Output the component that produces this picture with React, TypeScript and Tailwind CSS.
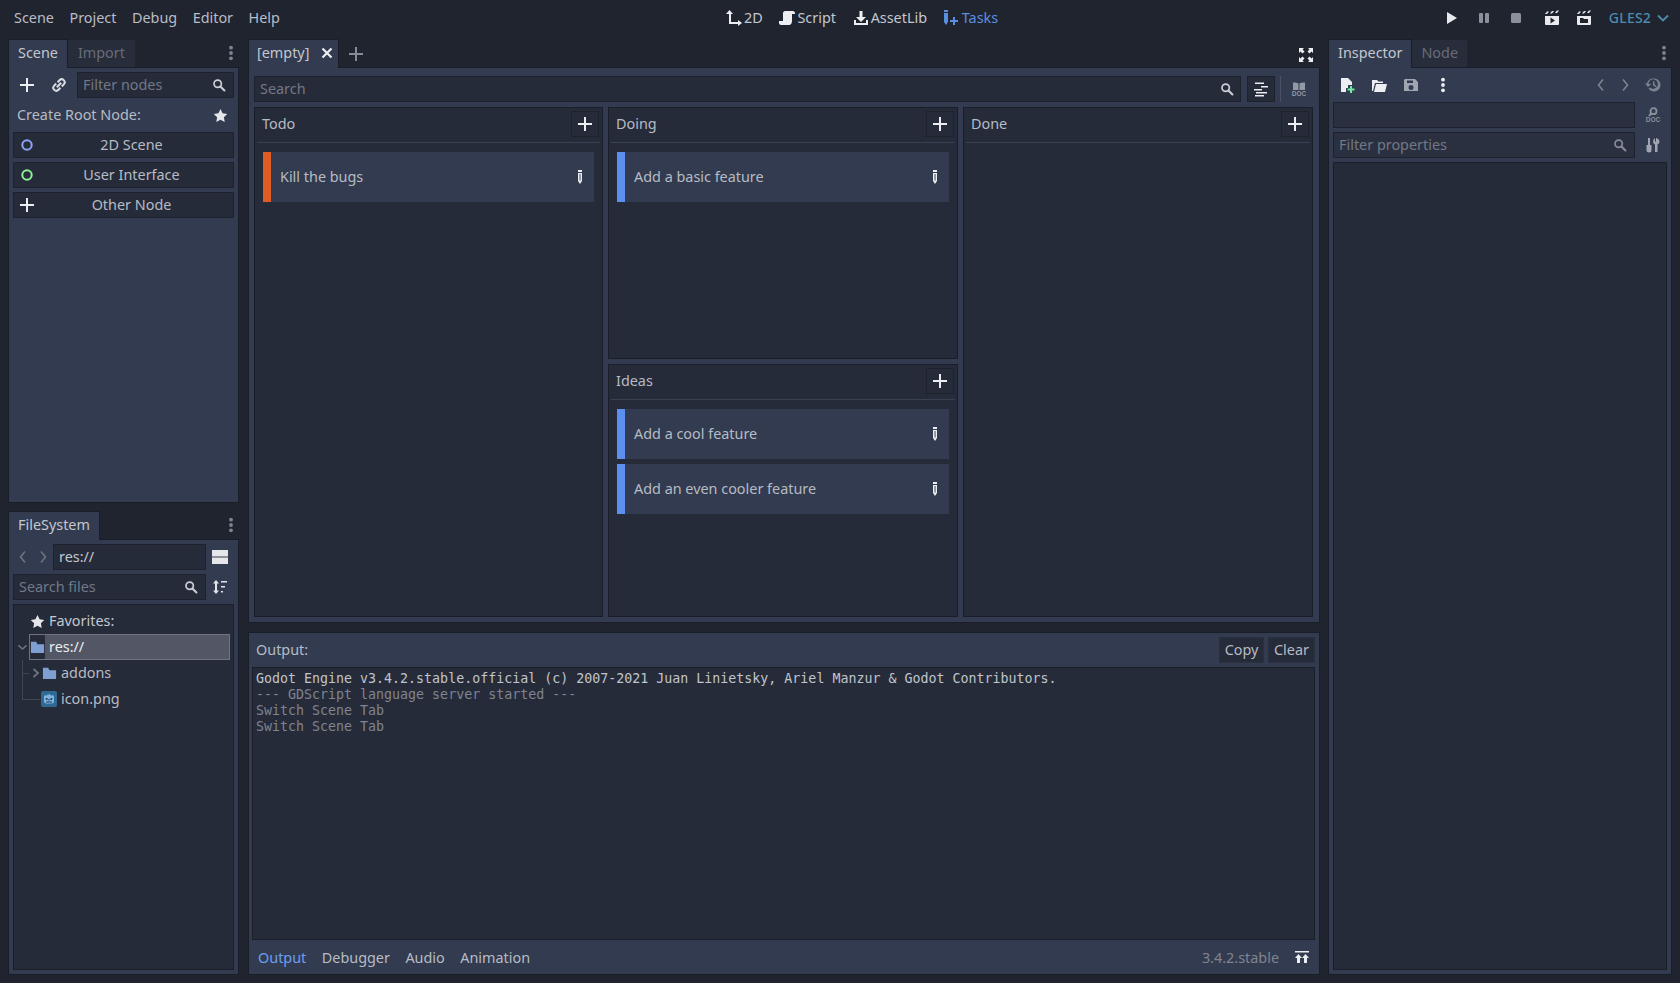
import React from "react";

type IP = { className?: string };
const S = ({ w = 16, h = 16, vb, className, children }: { w?: number; h?: number; vb?: string; className?: string; children: React.ReactNode }) => (
  <svg width={w} height={h} viewBox={vb ?? `0 0 ${w} ${h}`} className={`shrink-0 ${className ?? ""}`} fill="currentColor">
    {children}
  </svg>
);
const Plus = ({ className }: IP) => (
  <S className={className}><path d="M7 1h2v6h6v2H9v6H7V9H1V7h6z" /></S>
);
const Search = ({ className }: IP) => (
  <S className={className}>
    <circle cx="6.5" cy="6.5" r="4.2" fill="none" stroke="currentColor" strokeWidth="2" />
    <path d="M9.6 9.6l4.6 4.6" stroke="currentColor" strokeWidth="2.4" strokeLinecap="round" />
  </S>
);
const Star = ({ className }: IP) => (
  <S className={className}><path d="M8 1l2.2 4.6 5 .7-3.6 3.5.9 5L8 12.4l-4.5 2.4.9-5L.8 6.3l5-.7z" /></S>
);
const Dots = ({ className }: IP) => (
  <S className={className}><circle cx="8" cy="2.7" r="1.9" /><circle cx="8" cy="8" r="1.9" /><circle cx="8" cy="13.3" r="1.9" /></S>
);
const Link = ({ className }: IP) => (
  <S className={className}>
    <g fill="none" stroke="currentColor" strokeWidth="2">
      <path d="M6.6 5.2l1.9-2a3 3 0 0 1 4.3 4.2L10.8 9.5" />
      <path d="M9.4 10.8l-1.9 2a3 3 0 0 1-4.3-4.2l2-2.1" />
      <path d="M5.8 10.2l4.4-4.4" />
    </g>
  </S>
);
const Ring = ({ color }: { color: string }) => (
  <S w={12} h={12}>
    <circle cx="6" cy="6" r="4.7" fill="none" stroke={color} strokeWidth="2" />
  </S>
);
const ChevL = ({ className }: IP) => (
  <S className={className}><path d="M10 2.5L5.5 8l4.5 5.5" fill="none" stroke="currentColor" strokeWidth="1.6" /></S>
);
const ChevR = ({ className }: IP) => (
  <S className={className}><path d="M6 2.5L10.500 8 6 13.500" fill="none" stroke="currentColor" strokeWidth="1.6" /></S>
);
const Folder = ({ className }: IP) => (
  <S className={className}><path d="M1 2.500h5.500l1.500 2.500h7v9.500H2a1 1 0 0 1-1-1z" /></S>
);
const GodotIcon = () => (
  <S>
    <rect x="0" y="0" width="16" height="16" rx="2" fill="#2f6a94" />
    <path d="M3 5l1.500-1 1 1 1-1.500h3l1 1.500 1-1 1.500 1v6.500l-2 1H5l-2-1z" fill="#7fb4e0" />
    <circle cx="5.700" cy="8" r="1.100" fill="#1d3e5c" />
    <circle cx="10.300" cy="8" r="1.100" fill="#1d3e5c" />
    <rect x="7.400" y="8" width="1.200" height="1.500" fill="#1d3e5c" />
    <rect x="5" y="10.500" width="6" height="1" fill="#1d3e5c" />
  </S>
);
const Pencil = ({ className }: IP) => (
  <S w={6} h={16} className={className}>
    <path d="M1 1h4v2H1zM1 4h4v8L3 15l-2-3z" />
    <rect x="2.600" y="5" width="0.900" height="6.500" fill="#323b4f" />
  </S>
);
const Doc = ({ top, className }: { top: "book" | "search"; className?: string }) => (
  <S className={className}>
    {top === "book" ? (
      <path d="M2 1.500c2.500 0 4.500 0 5.500 1v6.500H2zM8.500 2.500c1-1 3-1 5.500-1V9H8.500z" />
    ) : (
      <g>
        <circle cx="8.500" cy="4.200" r="3" fill="none" stroke="currentColor" strokeWidth="1.800" />
        <path d="M6.300 6.500L4 9" stroke="currentColor" strokeWidth="2" />
      </g>
    )}
    <text x="8" y="15.400" textAnchor="middle" fontFamily="'Liberation Sans', sans-serif" fontWeight="700" fontSize="6.500">DOC</text>
  </S>
);

const Tab = ({ children, active, px = "px-[9px]" }: { children: React.ReactNode; active?: boolean; px?: string }) => (
  <div
    className={
      active
        ? `h-[29px] ${px} pb-[3px] flex items-center bg-[#323b4f] border border-b-0 border-[#1a1e29] text-[#c3c7d0] mb-[-1px] z-10`
        : `h-[27px] ${px} pb-[2px] flex items-center bg-[#282d3b] text-[#666c7a]`
    }
  >
    {children}
  </div>
);

const Input = ({ className, children, icon = true, value, tight }: { className?: string; children?: React.ReactNode; icon?: boolean; value?: boolean; tight?: boolean }) => (
  <div className={`h-[26px] flex items-center justify-between bg-[#262b3a] border border-[#1e222d] px-[5px] ${className ?? ""}`}>
    <span className={value ? "text-[#c3c7d0]" : "text-[#727886]"}>{children}</span>
    {icon && <Search className={`text-[#c9cdd4] w-[14px] h-[14px] ${tight ? "mr-[2px]" : "mr-[1px]"}`} />}
  </div>
);

const RootBtn = ({ icon, label }: { icon: React.ReactNode; label: string }) => (
  <div className="h-[26px] flex items-center bg-[#262b3a] border border-[#1e222d] text-[#b6bbc5]">
    <span className="w-[26px] flex justify-center">{icon}</span>
    <span className="flex-1 text-center pr-[10px]">{label}</span>
  </div>
);

const Card = ({ text, color }: { text: string; color: string }) => (
  <div className="h-[50px] flex items-center bg-[#323b4f] text-[#b6bbc5]">
    <div className="w-[8px] h-full" style={{ backgroundColor: color }} />
    <span className="flex-1 pl-[9px]">{text}</span>
    <Pencil className="text-[#eceef1] mr-[11px]" />
  </div>
);

const Column = ({ title, cards, className }: { title: string; cards: { t: string; c: string }[]; className?: string }) => (
  <div className={`flex flex-col bg-[#262b3a] border border-[#1a1e29] ${className ?? ""}`}>
    <div className="mx-[2px] h-[35px] flex items-center justify-between border-b border-[#3a4152] pl-[5px] pr-[1px] pb-[2px]">
      <span className="text-[#b6bbc5]">{title}</span>
      <span className="w-[28px] h-[26px] flex items-center justify-center bg-[#262b3a] border border-[#1e222d] text-[#eceef1]">
        <Plus />
      </span>
    </div>
    <div className="flex flex-col gap-[5px] pt-[9px] px-[8px]">
      {cards.map((c) => (
        <Card key={c.t} text={c.t} color={c.c} />
      ))}
    </div>
  </div>
);

const BLUE = "#5d8fef";
const ORANGE = "#e05c25";

export default function App() {
  return (
    <div
      className="w-[1680px] h-[983px] bg-[#20242f] flex flex-col overflow-hidden text-[14.4px] leading-[20px]"
      style={{ fontFamily: "'Noto Sans', sans-serif" }}
    >
      {/* top bar */}
      <div className="h-[39px] shrink-0 flex items-center pl-[14px] pr-[9px] pb-[3px] text-[#b9bdc7]">
        <div className="w-[600px] flex gap-[15.5px]">
          <span>Scene</span><span>Project</span><span>Debug</span><span>Editor</span><span>Help</span>
        </div>
        <div className="flex gap-[16.7px] ml-[112px] text-[#c3c7d0]">
          <span className="flex items-center gap-[2px]">
            <S className="text-[#eceef1]"><path d="M3.500 0L7 4H5v8h7v-2l4 3-4 3v-2H3V4H0z" /></S>
            2D
          </span>
          <span className="flex items-center gap-[2px]">
            <S className="text-[#eceef1]"><path d="M6 1h8c1 0 2 1 2 2v1h-3v7c0 2-1 4-3 4H2c-1 0-2-1-2-2v-2h4V3c0-1 1-2 2-2z" /></S>
            Script
          </span>
          <span className="flex items-center gap-[2px]">
            <S className="text-[#eceef1]"><path d="M6.500 1h3v6H13L8 12 3 7h3.500zM1 10h2v3h10v-3h2v5H1z" /></S>
            AssetLib
          </span>
          <span className="flex items-center gap-[4px] text-[#5a8fe0]">
            <S w={14} className="text-[#5a8fe0]"><path d="M0 0h4v2H0zM0 3h4v9l-2 3-2-3zM9 7h2v3h3v2h-3v3H9v-3H6v-2h3z" /></S>
            Tasks
          </span>
        </div>
        <div className="flex-1" />
        <div className="flex items-center text-[#e8eaee]">
          <S className="mr-[16px]"><path d="M3 2l10 6-10 6z" /></S>
          <S className="mr-[16px] text-[#8b909c]"><rect x="3" y="3" width="4" height="10" rx="1" /><rect x="9" y="3" width="4" height="10" rx="1" /></S>
          <S className="mr-[20px] text-[#8b909c]"><rect x="3" y="3" width="10" height="10" rx="1.500" /></S>
          <S className="mr-[16px]"><path d="M1 6h14v8a1 1 0 0 1-1 1H2a1 1 0 0 1-1-1zM1 4l2-2.500h2L3 4zM6 3.500l2-2.500h2L8 3.500zM11 3l2-2.500h2L13 3z" /><path d="M6.500 7.500L11 10.500l-4.500 3z" fill="#20242f" /></S>
          <S className="mr-[17px]"><path d="M1 6h14v8a1 1 0 0 1-1 1H2a1 1 0 0 1-1-1zM1 4l2-2.500h2L3 4zM6 3.500l2-2.500h2L8 3.500zM11 3l2-2.500h2L13 3z" /><path d="M4 8h3l1 1h4v4H4z" fill="#20242f" /></S>
          <span className="text-[#4f8bb0] text-[14px] font-medium tracking-[0.2px]">GLES2</span>
          <S className="ml-[4px] text-[#4f8bb0]"><path d="M3 5.500L8 10.500l5-5" fill="none" stroke="currentColor" strokeWidth="1.800" /></S>
        </div>
      </div>

      {/* main */}
      <div className="flex-1 min-h-0 flex pl-[8px] pr-[8px] pb-[8px]">
        {/* left dock */}
        <div className="w-[231px] shrink-0 flex flex-col">
          <div className="flex items-end h-[28px] shrink-0">
            <Tab active>Scene</Tab>
            <Tab px="px-[10px]">Import</Tab>
            <div className="flex-1" />
            <Dots className="text-[#7d8390] mb-[6px]" />
          </div>
          <div className="h-[436px] shrink-0 bg-[#323b4f] border border-[#1a1e29] p-[4px] flex flex-col gap-[4px] text-[#b6bbc5]">
            <div className="flex items-center h-[26px]">
              <span className="w-[28px] flex justify-center text-[#eceef1]"><Plus /></span>
              <span className="w-[36px] flex justify-center text-[#d9dce2]"><Link /></span>
              <Input className="flex-1 ml-0" tight>Filter nodes</Input>
            </div>
            <div className="flex items-center justify-between h-[26px] pl-[4px] pr-[6px]">
              <span>Create Root Node:</span>
              <Star className="text-[#e4e6ea] w-[15px] h-[15px]" />
            </div>
            <RootBtn icon={<Ring color="#8da5f3" />} label="2D Scene" />
            <RootBtn icon={<Ring color="#8eef97" />} label="User Interface" />
            <RootBtn icon={<Plus className="text-[#eceef1]" />} label="Other Node" />
          </div>
          <div className="h-[8px] shrink-0" />
          <div className="flex items-end h-[28px] shrink-0">
            <Tab active>FileSystem</Tab>
            <div className="flex-1" />
            <Dots className="text-[#7d8390] mb-[6px]" />
          </div>
          <div className="flex-1 min-h-0 bg-[#323b4f] border border-[#1a1e29] p-[4px] flex flex-col gap-[4px] text-[#b6bbc5]">
            <div className="flex items-center h-[26px]">
              <ChevL className="text-[#6d7381] ml-[2px]" />
              <ChevR className="text-[#6d7381] ml-[4px]" />
              <Input className="w-[153px] ml-[2px]" icon={false} value>res://</Input>
              <S className="ml-[6px] text-[#e4e6ea]"><rect x="0" y="1" width="16" height="6.500" /><rect x="0" y="8.500" width="16" height="6.500" /></S>
            </div>
            <div className="flex items-center h-[26px]">
              <Input className="w-[193px]" tight>Search files</Input>
              <S className="ml-[6px] text-[#e4e6ea]"><path d="M4 1l3 3.500H5v7h2l-3 3.500-3-3.500h2v-7H1zM9 2h6v1.500H9zM9 7h4v1.500H9zM9 12h2v1.500H9z" /></S>
            </div>
            <div className="flex-1 min-h-0 bg-[#262b3a] border border-[#1a1e29] pt-[3px] flex flex-col">
              <div className="h-[26px] flex items-center pl-[16px] gap-[4px] text-[#c3c7d0]">
                <Star className="text-[#e4e6ea] w-[15px] h-[15px]" /> Favorites:
              </div>
              <div className="h-[26px] flex items-center pl-[2px]">
                <S className="text-[#6d7381] w-[13px]"><path d="M3 6l5 4.500L13 6" fill="none" stroke="currentColor" strokeWidth="1.800" /></S>
                <div className="flex-1 h-full mr-[3px] flex items-center border border-[#6f7482]">
                  <span className="w-[15px] h-full flex items-center bg-[#262b3a] text-[#7f9fd3]"><Folder className="w-[15px]" /></span>
                  <span className="flex-1 h-full flex items-center bg-[#525665] pl-[4px] text-[#eceef1]">res://</span>
                </div>
              </div>
              <div className="h-[26px] flex items-center pl-[8px]">
                <svg width="10" height="26" className="shrink-0 text-[#3f4657]" fill="currentColor"><rect x="0" y="0" width="1" height="26" /><rect x="0" y="13" width="7" height="1" /></svg>
                <S w={8} h={12} className="text-[#6d7381] mr-[2px]"><path d="M1.500 2L6 6l-4.500 4" fill="none" stroke="currentColor" strokeWidth="1.800" /></S>
                <Folder className="text-[#7f9fd3] w-[15px]" />
                <span className="ml-[4px]">addons</span>
              </div>
              <div className="h-[26px] flex items-center pl-[8px]">
                <svg width="19" height="26" className="shrink-0 text-[#3f4657]" fill="currentColor"><rect x="0" y="0" width="1" height="13" /><rect x="0" y="13" width="18" height="1" /></svg>
                <GodotIcon />
                <span className="ml-[4px]">icon.png</span>
              </div>
            </div>
          </div>
        </div>

        {/* center */}
        <div className="w-[1072px] ml-[9px] shrink-0 flex flex-col">
          <div className="flex items-end h-[28px] shrink-0">
            <Tab active px="pl-[8px] pr-[3px]">
              [empty]
              <S className="ml-[10px] text-[#eceef1]"><path d="M3.500 3.500l9 9M12.500 3.500l-9 9" stroke="currentColor" strokeWidth="2.200" fill="none" /></S>
            </Tab>
            <Plus className="ml-[9px] mb-[5px] text-[#858a96]" />
            <div className="flex-1" />
            <S className="mr-[6px] mb-[4px] text-[#eceef1]"><path d="M1 1h5L4.500 2.500 6.500 4.500 4.500 6.500 2.500 4.500 1 6zM15 1v5l-1.500-1.500-2 2-2-2 2-2L10 1zM1 15v-5l1.500 1.500 2-2 2 2-2 2L6 15zM15 15h-5l1.500-1.500-2-2 2-2 2 2L15 10z" /></S>
          </div>
          <div className="h-[556px] shrink-0 bg-[#323b4f] border border-[#1a1e29] pt-[8px] pl-[5px] pr-[6px] flex flex-col gap-[5px]">
            <div className="flex items-center h-[26px]">
              <Input className="w-[987px]">Search</Input>
              <span className="ml-[6px] w-[28px] h-[26px] flex items-center justify-center bg-[#262b3a] border border-[#1e222d] text-[#eceef1]">
                <S><path d="M2 1.500h9V3H2zM8 5h7v1.500H8zM1 8h8v1.500H1zM3 11h11v1.500H3zM2 14h9v1.500H2z" /></S>
              </span>
              <span className="ml-[5px] w-px h-[26px] bg-[#495165]" />
              <Doc top="book" className="ml-[10px] text-[#9298a4]" />
            </div>
            <div className="h-[510px] flex gap-[5px]">
              <Column className="w-[349px]" title="Todo" cards={[{ t: "Kill the bugs", c: ORANGE }]} />
              <div className="w-[350px] flex flex-col gap-[5px]">
                <Column className="h-[252px]" title="Doing" cards={[{ t: "Add a basic feature", c: BLUE }]} />
                <Column className="flex-1" title="Ideas" cards={[{ t: "Add a cool feature", c: BLUE }, { t: "Add an even cooler feature", c: BLUE }]} />
              </div>
              <Column className="w-[350px]" title="Done" cards={[]} />
            </div>
          </div>
          <div className="h-[9px] shrink-0" />
          <div className="flex-1 min-h-0 bg-[#323b4f] border border-[#1a1e29] flex flex-col pl-[3px] pr-[4px]">
            <div className="h-[34px] shrink-0 flex items-center pl-[4px] pb-[1px] text-[#b6bbc5]">
              <span className="flex-1">Output:</span>
              <span className="w-[45px] h-[26px] flex items-center justify-center bg-[#262b3a] border border-[#2a3040]">Copy</span>
              <span className="w-[47px] h-[26px] ml-[4px] flex items-center justify-center bg-[#262b3a] border border-[#2a3040]">Clear</span>
            </div>
            <div
              className="flex-1 min-h-0 bg-[#262b3a] border border-[#1a1e29] pl-[3px] pt-[3px] text-[13.3px] leading-[16px] text-[#7f8490]"
              style={{ fontFamily: "'DejaVu Sans Mono', monospace" }}
            >
              <div className="text-[#c0c4cc]">Godot Engine v3.4.2.stable.official (c) 2007-2021 Juan Linietsky, Ariel Manzur &amp; Godot Contributors.</div>
              <div>--- GDScript language server started ---</div>
              <div>Switch Scene Tab</div>
              <div>Switch Scene Tab</div>
            </div>
            <div className="h-[34px] shrink-0 flex items-center pl-[6px] pr-[5px] pt-[1px] text-[#b6bbc5]">
              <span className="text-[#6d9ff0]">Output</span>
              <span className="ml-[15.5px]">Debugger</span>
              <span className="ml-[15.5px]">Audio</span>
              <span className="ml-[15.5px]">Animation</span>
              <span className="flex-1" />
              <span className="text-[#7f8490]">3.4.2.stable</span>
              <S className="ml-[15px] text-[#eceef1]"><path d="M1 1h14v1.500H1zM4.500 4L8 8H6v5H3V8H1zM11.500 4L15 8h-2v5h-3V8H8z" /></S>
            </div>
          </div>
        </div>

        {/* right dock */}
        <div className="flex-1 ml-[8px] min-w-0 flex flex-col">
          <div className="flex items-end h-[28px] shrink-0">
            <Tab active>Inspector</Tab>
            <Tab px="px-[9px]">Node</Tab>
            <div className="flex-1" />
            <Dots className="text-[#7d8390] mb-[6px]" />
          </div>
          <div className="flex-1 min-h-0 bg-[#323b4f] border border-[#1a1e29] p-[4px] flex flex-col gap-[4px]">
            <div className="h-[26px] flex items-center pl-[6px] pr-[6px] text-[#eceef1]">
              <S><path d="M2 1h7l4 4v3H9v3H7v4H2z" /><path d="M11 9h2v2.500h2.500v2H13V16h-2v-2.500H8.500v-2H11z" fill="#70e8a0" /></S>
              <S className="ml-[16px]"><path d="M1 3h5l1.500 1.500H12V6H4L2 14H1zM5 7h11l-2 8H3z" /></S>
              <S className="ml-[16px] text-[#a0a5b0]"><path fillRule="evenodd" d="M2 2h10l3 3v9H1V3zM4 3.500V6h6V3.500zM8 8a2.500 2.500 0 1 0 0 5 2.500 2.500 0 0 0 0-5z" /></S>
              <Dots className="ml-[16px]" />
              <span className="flex-1" />
              <ChevL className="text-[#7d8390]" />
              <ChevR className="text-[#7d8390] ml-[8px]" />
              <S className="ml-[12px] text-[#7d8390]"><path d="M9 1.500a6.500 6.500 0 1 1-5.500 10l1.500-1a4.700 4.700 0 1 0-1.500-3.500H6L3 10 0 6.500h1.900A7 7 0 0 1 9 1.500zM8 4.500h1.500v3l2 1.500-.8 1.200L8 8.300z" /></S>
            </div>
            <div className="h-[26px] flex items-center">
              <div className="w-[302px] h-[26px] bg-[#2a3040] border border-[#1e222d]" />
              <Doc top="search" className="ml-[10px] text-[#8b909c]" />
            </div>
            <div className="h-[26px] flex items-center">
              <div className="w-[302px] h-[26px] flex items-center justify-between bg-[#2a3040] border border-[#1e222d] pl-[5px] pr-[7px]">
                <span className="text-[#727886]">Filter properties</span>
                <Search className="text-[#868b97] w-[14px] h-[14px]" />
              </div>
              <S className="ml-[10px] text-[#a0a5b0]"><path d="M3 1h2v7h1.500v5a2.500 2.500 0 0 1-5 0V8H3zM10 1v3.500h1V1h.500v0a4 4 0 0 1 3 3.500c0 1.500-1 2.500-2 3V15h-2.500V7.500c-1-.5-2-1.500-2-3A4 4 0 0 1 10 1z" /></S>
            </div>
            <div className="flex-1 min-h-0 bg-[#262b3a] border border-[#1a1e29]" />
          </div>
        </div>
      </div>
    </div>
  );
}
